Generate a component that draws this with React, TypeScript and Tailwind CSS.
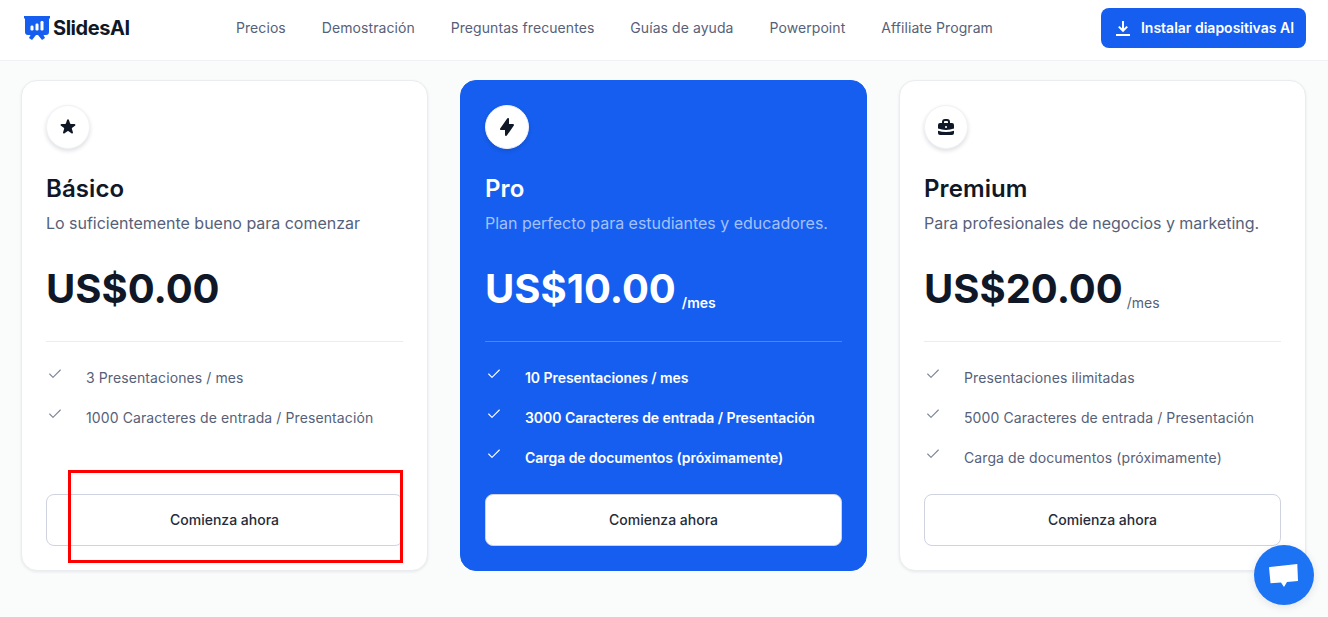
import { Check } from "lucide-react";
import type { ReactNode } from "react";

type Plan = {
  name: string;
  blurb: string;
  price: string;
  per?: string;
  features: string[];
  icon: ReactNode;
  featured?: boolean;
};

const plans: Plan[] = [
  {
    name: "Básico",
    blurb: "Lo suficientemente bueno para comenzar",
    price: "US$0.00",
    features: ["3 Presentaciones / mes", "1000 Caracteres de entrada / Presentación"],
    icon: (
      <svg viewBox="0 0 20 20" className="h-5 w-5 fill-[#101828]">
        <path d="M9.049 2.927c.3-.921 1.603-.921 1.902 0l1.07 3.292a1 1 0 00.95.69h3.462c.969 0 1.371 1.24.588 1.81l-2.8 2.034a1 1 0 00-.364 1.118l1.07 3.292c.3.921-.755 1.688-1.54 1.118l-2.8-2.034a1 1 0 00-1.175 0l-2.8 2.034c-.784.57-1.838-.197-1.539-1.118l1.07-3.292a1 1 0 00-.364-1.118L2.98 8.72c-.783-.57-.38-1.81.588-1.81h3.461a1 1 0 00.951-.69l1.07-3.292z" />
      </svg>
    ),
  },
  {
    name: "Pro",
    blurb: "Plan perfecto para estudiantes y educadores.",
    price: "US$10.00",
    per: "/mes",
    features: [
      "10 Presentaciones / mes",
      "3000 Caracteres de entrada / Presentación",
      "Carga de documentos (próximamente)",
    ],
    icon: (
      <svg viewBox="0 0 20 20" className="h-5 w-5 fill-[#101828]">
        <path d="M11.3 1.046A1 1 0 0112 2v5h4a1 1 0 01.82 1.573l-7 10A1 1 0 018 18v-5H4a1 1 0 01-.82-1.573l7-10a1 1 0 011.12-.38z" />
      </svg>
    ),
    featured: true,
  },
  {
    name: "Premium",
    blurb: "Para profesionales de negocios y marketing.",
    price: "US$20.00",
    per: "/mes",
    features: [
      "Presentaciones ilimitadas",
      "5000 Caracteres de entrada / Presentación",
      "Carga de documentos (próximamente)",
    ],
    icon: (
      <svg viewBox="0 0 20 20" className="h-5 w-5 fill-[#101828]">
        <path
          fillRule="evenodd"
          d="M6 6V5a3 3 0 013-3h2a3 3 0 013 3v1h2a2 2 0 012 2v3.57A22.952 22.952 0 0110 13a22.95 22.95 0 01-8-1.43V8a2 2 0 012-2h2zm2-1a1 1 0 011-1h2a1 1 0 011 1v1H8V5zm1 5a1 1 0 011-1h.01a1 1 0 110 2H10a1 1 0 01-1-1z"
        />
        <path d="M2 13.692V16a2 2 0 002 2h12a2 2 0 002-2v-2.308A24.974 24.974 0 0110 15c-2.796 0-5.487-.46-8-1.308z" />
      </svg>
    ),
  },
];

const links = ["Precios", "Demostración", "Preguntas frecuentes", "Guías de ayuda", "Powerpoint", "Affiliate Program"];

function Logo() {
  return (
    <svg viewBox="0 0 26 25" className="h-[25px] w-[26px]">
      <path d="M0 0h26v2.5h-1V16a3 3 0 0 1-3 3H4a3 3 0 0 1-3-3V2.5H0z" fill="#155eef" />
      <path d="M6.5 19l-1.5 3 3 2 4-5zM19.5 19l1.5 3-3 2-4-5z" fill="#155eef" />
      <rect x="6.5" y="9.5" width="3" height="5" rx="1.2" fill="#fff" />
      <rect x="11.5" y="7.5" width="3" height="7" rx="1.2" fill="#fff" />
      <rect x="16.5" y="5" width="3" height="9.5" rx="1.2" fill="#fff" />
    </svg>
  );
}

function PlanCard({ plan }: { plan: Plan }) {
  const on = plan.featured;
  return (
    <div
      className={`flex h-[491px] flex-col rounded-2xl border px-6 pt-6 pb-6 ${
        on ? "border-[#155eef] bg-[#155eef]" : "border-[#eaecf0] bg-white shadow-[0_1px_3px_rgba(16,24,40,0.08)]"
      }`}
    >
      <div className="flex h-11 w-11 items-center justify-center rounded-full border border-[#f1f2f5] bg-white shadow-[0_2px_4px_rgba(16,24,40,0.14)]">
        {plan.icon}
      </div>
      <h3 className={`mt-6 text-2xl leading-8 font-semibold tracking-[0.1px] ${on ? "text-white" : "text-[#101828]"}`}>
        {plan.name}
      </h3>
      <p className={`mt-[6px] text-base leading-6 tracking-[-0.02px] ${on ? "text-[#a3c1fb]" : "text-[#566179]"}`}>
        {plan.blurb}
      </p>
      <div className="mt-[28px] flex items-end">
        <span className={`text-[40px] leading-[52px] font-bold ${on ? "text-white" : "text-[#101828]"}`}>
          {plan.price}
        </span>
        {plan.per && (
          <span
            className={`mb-[2px] text-sm leading-5 ${
              on ? "ml-[6px] font-semibold text-white" : "ml-[4px] text-[#566179]"
            }`}
          >
            {plan.per}
          </span>
        )}
      </div>
      <div className={`mt-[26px] h-px ${on ? "bg-[#4a85f7]" : "bg-[#eaecf0]"}`} />
      <ul className="mt-[26px] flex h-[126px] flex-col gap-5">
        {plan.features.map((f) => (
          <li key={f} className="flex h-5 items-center">
            <Check
              size={16}
              strokeWidth={1.6}
              className={`mb-2 ml-px w-[16px] shrink-0 ${on ? "text-white" : "text-[#7c8597]"}`}
            />
            <span
              className={`ml-[23px] text-sm leading-5 ${
                on ? "font-semibold tracking-[-0.05px] text-white" : "tracking-[0.1px] text-[#566179]"
              }`}
            >
              {f}
            </span>
          </li>
        ))}
      </ul>
      <button className="h-[52px] w-full rounded-lg border border-[#cfd3e0] bg-white text-sm font-medium text-[#252b3a]">
        Comienza ahora
      </button>
    </div>
  );
}

export default function App() {
  return (
    <div className="relative h-[617px] w-[1328px] overflow-hidden bg-[#fafbfb] font-['Inter',sans-serif]">
      <header className="flex h-[61px] items-center border-b border-[#f1f2f4] bg-white pr-[22px] pb-[4px] pl-[24px]">
        <div className="flex w-[212px] items-center gap-[3px]">
          <Logo />
          <span className="text-[20px] font-bold tracking-[-0.45px] text-[#101828]">SlidesAI</span>
        </div>
        <nav className="flex flex-1 items-center gap-9">
          {links.map((l) => (
            <a key={l} className="text-sm leading-5 tracking-[0.07px] text-[#566179]">
              {l}
            </a>
          ))}
        </nav>
        <button className="flex h-10 w-[205px] items-center justify-center gap-[10px] rounded-lg bg-[#155eef] pl-[2px] text-sm font-semibold text-white">
          <svg viewBox="0 0 16 16" className="h-4 w-4 fill-none stroke-white stroke-2">
            <path d="M8 1v9M3.8 6.6L8 10.8l4.2-4.2M1 15h14" />
          </svg>
          Instalar diapositivas AI
        </button>
      </header>

      <main className="grid grid-cols-3 gap-8 pt-[19px] pr-[22px] pl-[21px]">
        {plans.map((p) => (
          <PlanCard key={p.name} plan={p} />
        ))}
      </main>

      {/* annotation drawn over the page */}
      <div className="absolute top-[470px] left-[68px] h-[93px] w-[335px] border-[3px] border-[#ff0000]" />

      <div className="absolute top-[545px] left-[1254px] flex h-[60px] w-[60px] items-center justify-center rounded-full bg-[#1c74f5] shadow-[0_2px_8px_rgba(16,24,40,0.1)]">
        <svg viewBox="0 0 30 24" className="mt-[2px] h-6 w-[30px] fill-white">
          <path d="M0 3.2L28.3 0 29 17 18 18 15 23 12 18.5 1.5 19.2z" />
        </svg>
      </div>
    </div>
  );
}
